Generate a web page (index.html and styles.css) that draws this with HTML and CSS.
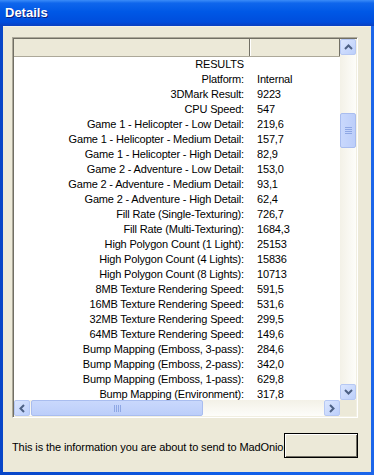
FILE: index.html
```html
<!DOCTYPE html>
<html lang="en">
<head>
    <meta charset="UTF-8">
    <meta name="viewport" content="width=device-width, initial-scale=1.0">
    <title>Details</title>
    <link rel="stylesheet" href="styles.css">
</head>
<body>
    <div class="window">
        <div class="titlebar">Details</div>

        <div class="client">
            <div class="listview">
                <div class="list-main">
                    <div class="list-header">
                        <div class="col-head col-label"></div>
                        <div class="col-head col-value"></div>
                    </div>
                    <div class="list-body">
                        <div class="row"><span class="label">RESULTS</span><span class="value"></span></div>
                        <div class="row"><span class="label">Platform:</span><span class="value">Internal</span></div>
                        <div class="row"><span class="label">3DMark Result:</span><span class="value">9223</span></div>
                        <div class="row"><span class="label">CPU Speed:</span><span class="value">547</span></div>
                        <div class="row"><span class="label">Game 1 - Helicopter - Low Detail:</span><span class="value">219,6</span></div>
                        <div class="row"><span class="label">Game 1 - Helicopter - Medium Detail:</span><span class="value">157,7</span></div>
                        <div class="row"><span class="label">Game 1 - Helicopter - High Detail:</span><span class="value">82,9</span></div>
                        <div class="row"><span class="label">Game 2 - Adventure - Low Detail:</span><span class="value">153,0</span></div>
                        <div class="row"><span class="label">Game 2 - Adventure - Medium Detail:</span><span class="value">93,1</span></div>
                        <div class="row"><span class="label">Game 2 - Adventure - High Detail:</span><span class="value">62,4</span></div>
                        <div class="row"><span class="label">Fill Rate (Single-Texturing):</span><span class="value">726,7</span></div>
                        <div class="row"><span class="label">Fill Rate (Multi-Texturing):</span><span class="value">1684,3</span></div>
                        <div class="row"><span class="label">High Polygon Count (1 Light):</span><span class="value">25153</span></div>
                        <div class="row"><span class="label">High Polygon Count (4 Lights):</span><span class="value">15836</span></div>
                        <div class="row"><span class="label">High Polygon Count (8 Lights):</span><span class="value">10713</span></div>
                        <div class="row"><span class="label">8MB Texture Rendering Speed:</span><span class="value">591,5</span></div>
                        <div class="row"><span class="label">16MB Texture Rendering Speed:</span><span class="value">531,6</span></div>
                        <div class="row"><span class="label">32MB Texture Rendering Speed:</span><span class="value">299,5</span></div>
                        <div class="row"><span class="label">64MB Texture Rendering Speed:</span><span class="value">149,6</span></div>
                        <div class="row"><span class="label">Bump Mapping (Emboss, 3-pass):</span><span class="value">284,6</span></div>
                        <div class="row"><span class="label">Bump Mapping (Emboss, 2-pass):</span><span class="value">342,0</span></div>
                        <div class="row"><span class="label">Bump Mapping (Emboss, 1-pass):</span><span class="value">629,8</span></div>
                        <div class="row"><span class="label">Bump Mapping (Environment):</span><span class="value">317,8</span></div>
                    </div>
                </div>

                <div class="vscroll">
                    <div class="sb-btn">
                        <svg width="9" height="6" viewBox="0 0 9 6"><path d="M1 5 L4.5 1.5 L8 5" fill="none" stroke="#4d6185" stroke-width="2"/></svg>
                    </div>
                    <div class="sb-track vtrack">
                        <div class="sb-thumb vthumb"><span class="grip"></span></div>
                    </div>
                    <div class="sb-btn">
                        <svg width="9" height="6" viewBox="0 0 9 6"><path d="M1 1 L4.5 4.5 L8 1" fill="none" stroke="#4d6185" stroke-width="2"/></svg>
                    </div>
                </div>

                <div class="hscroll">
                    <div class="sb-btn">
                        <svg width="6" height="9" viewBox="0 0 6 9"><path d="M5 1 L1.5 4.5 L5 8" fill="none" stroke="#4d6185" stroke-width="2"/></svg>
                    </div>
                    <div class="sb-track htrack">
                        <div class="sb-thumb hthumb"><span class="grip"></span></div>
                    </div>
                    <div class="sb-btn">
                        <svg width="6" height="9" viewBox="0 0 6 9"><path d="M1 1 L4.5 4.5 L1 8" fill="none" stroke="#4d6185" stroke-width="2"/></svg>
                    </div>
                </div>

                <div class="corner"></div>
            </div>

            <div class="footer">
                <div class="info">This is the information you are about to send to MadOnion.com</div>
                <button class="send"></button>
            </div>
        </div>
    </div>
</body>
</html>
```

FILE: styles.css
```css
html, body { margin: 0; padding: 0; }
body { width: 374px; height: 475px; overflow: hidden; font-family: Tahoma, "Liberation Sans", Arial, sans-serif; font-size: 11px; color: #000; }

.window { display: flex; flex-direction: column; height: 475px; background: linear-gradient(to right, #0846c8, #0f5ee8 60%, #1c66ea); }
.titlebar { height: 26px; padding-left: 5px; line-height: 25px; color: #fff; font-family: "Liberation Sans", Arial, sans-serif; font-weight: bold; font-size: 13px; text-shadow: 1px 1px #0a1f80;
    background: linear-gradient(to bottom, #3b8cf8 0%, #0f66ec 12%, #0058e6 45%, #004ddc 85%, #0a40c0 100%); }

.client { flex: 1; margin: 0 3px 3px 3px; background: #ece9d8; padding: 10px 13px 0 9px; border-top: 1px solid #f3f1e8; }

/* list view */
.listview { display: grid; grid-template-columns: 1fr 16px; grid-template-rows: 361px 16px; height: 377px;
    border: 1px solid #aca899; border-right-color: #fff; border-bottom-color: #fff; box-shadow: inset 1px 1px #716f64, inset -1px -1px #f1efe2; padding: 1px; background: #fff; }
.list-main { overflow: hidden; background: #fff; }
.list-header { display: flex; height: 17px; background: #ece9d8; border-bottom: 1px solid #aca899; }
.col-head { height: 17px; box-sizing: border-box; }
.col-label { width: 236px; border-right: 1px solid #716f64; box-shadow: 1px 0 #fff; }
.col-value { flex: 1; border-right: 1px solid #716f64; }

.list-body { white-space: nowrap; letter-spacing: -0.17px; }
.row { display: flex; box-sizing: border-box; height: 15px; padding-top: 0.5px; line-height: 13px; }
.label { width: 230px; padding-right: 6px; text-align: right; flex-shrink: 0; }
.value { padding-left: 7px; }

/* scrollbars */
.vscroll { display: flex; flex-direction: column; background: #f6f5ee; }
.hscroll { display: flex; background: #f6f5ee; }
.sb-btn { width: 16px; height: 16px; box-sizing: border-box; flex-shrink: 0; display: flex; align-items: center; justify-content: center;
    background: linear-gradient(135deg, #dbe6fe, #bccffb); border: 1px solid #b6c8f3; border-radius: 2px; }
.sb-track { flex: 1; position: relative; background: linear-gradient(to right, #f3f1e7, #fdfdfa); }
.htrack { background: linear-gradient(to bottom, #f3f1e7, #fdfdfa); }
.sb-thumb { position: absolute; box-sizing: border-box; display: flex; align-items: center; justify-content: center;
    background: linear-gradient(to right, #c9d8fc, #bccefa); border: 1px solid #a9bdef; border-radius: 2px; }
.vthumb { left: 0; width: 16px; top: 58px; height: 35px; }
.hthumb { top: 0; height: 16px; left: 1px; width: 172px; background: linear-gradient(to bottom, #c9d8fc, #bccefa); }
.vthumb .grip { width: 7px; height: 7px; background: repeating-linear-gradient(to bottom, #8ea7e4 0 1px, transparent 1px 2px); }
.hthumb .grip { width: 7px; height: 7px; background: repeating-linear-gradient(to right, #8ea7e4 0 1px, transparent 1px 2px); }
.corner { background: #ece9d8; }

/* footer */
.footer { display: flex; align-items: center; margin-top: 15px; height: 25px; }
.info { width: 272px; overflow: hidden; white-space: nowrap; font-family: "Liberation Sans", Arial, sans-serif; font-size: 11px; letter-spacing: -0.1px; padding-top: 2px; }
.send { width: 74px; height: 25px; margin: 0; padding: 0; background: #ece9d8; border: 1px solid #000; box-shadow: inset 1px 1px #fff, inset -1px -1px #716f64; }
```
